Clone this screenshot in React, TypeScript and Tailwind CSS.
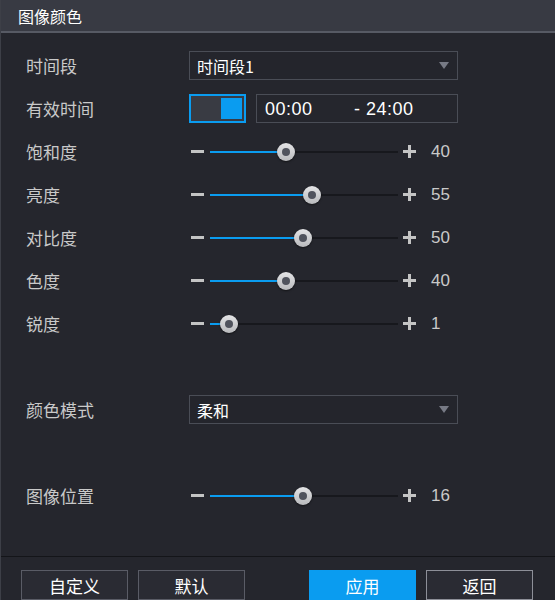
import React from "react";

const font = { fontFamily: '"Noto Sans CJK SC", "Noto Sans", sans-serif' };
const numFont = { fontFamily: '"Liberation Sans", Arial, sans-serif' };

function Label({ children }: { children: React.ReactNode }) {
  return <div className="w-[163px] shrink-0 text-[17px] text-[#c9c9c9] leading-none">{children}</div>;
}

function Slider({ pos, value }: { pos: number; value: string }) {
  return (
    <div className="flex items-center">
      <div className="ml-[2px] w-[13px] h-[3px] bg-[#c4c4c4]" />
      <div className="relative ml-[6px] w-[188px] h-[2px] bg-[#17181d]">
        <div className="absolute left-0 top-0 h-[2px] bg-[#0a9cf0]" style={{ width: pos }} />
        <div
          className="absolute top-1/2 w-[18px] h-[18px] -translate-x-1/2 -translate-y-1/2 rounded-full bg-gradient-to-b from-[#e4e4e6] to-[#b9babd] flex items-center justify-center shadow-[0_1px_2px_rgba(0,0,0,0.5)]"
          style={{ left: pos }}
        >
          <div className="w-[8px] h-[8px] rounded-full bg-[#50535d]" />
        </div>
      </div>
      <div className="relative ml-[5px] w-[13px] h-[13px]">
        <div className="absolute left-0 top-[5px] w-[13px] h-[3px] bg-[#c4c4c4]" />
        <div className="absolute left-[5px] top-0 w-[3px] h-[13px] bg-[#c4c4c4]" />
      </div>
      <div className="ml-[15px] text-[17px] text-[#c9c9c9] leading-none" style={numFont}>{value}</div>
    </div>
  );
}

function Select({ text }: { text: string }) {
  return (
    <div className="w-[269px] h-[29px] border border-[#4a4d56] bg-[#24252c] flex items-center pl-[7px] pr-[8px]">
      <span className="text-[16px] text-white leading-none flex-1">{text}</span>
      <svg width="10" height="7" viewBox="0 0 10 7">
        <polygon points="0,0 10,0 5,7" fill="#777a85" />
      </svg>
    </div>
  );
}

function Row({ children }: { children: React.ReactNode }) {
  return <div className="h-[43px] flex items-center pl-[25px]">{children}</div>;
}

function Button({ text, primary, light }: { text: string; primary?: boolean; light?: boolean }) {
  return (
    <div
      className={
        "w-[107px] h-[30px] flex items-center justify-center text-[17px] leading-none " +
        (primary
          ? "bg-[#0a9cf0] text-white border border-[#0a9cf0]"
          : light
          ? "bg-[#2a2b33] text-white border border-[#8d8f98]"
          : "bg-[#2a2b33] text-white border border-[#5a5c66]")
      }
    >
      {text}
    </div>
  );
}

export default function App() {
  return (
    <div className="w-[555px] h-[600px] bg-[#25262d] flex flex-col overflow-hidden border-l border-[#3d3f47]" style={font}>
      <div className="h-[33px] shrink-0 bg-[#383a43] border-b-2 border-[#575a64] flex items-center pl-[17px]">
        <span className="text-[16px] text-white leading-none">图像颜色</span>
      </div>
      <div className="h-[11px] shrink-0" />
      <Row>
        <Label>时间段</Label>
        <Select text="时间段1" />
      </Row>
      <Row>
        <Label>有效时间</Label>
        <div className="w-[57px] h-[29px] border-2 border-[#0a9cf0] bg-[#393b43] flex items-center justify-end pr-[2px]">
          <div className="w-[21px] h-[21px] bg-[#0a9cf0]" />
        </div>
        <div
          className="ml-[10px] w-[202px] h-[29px] border border-[#4a4d56] flex items-center pl-[8px] text-[18px] text-white leading-none tracking-[0.5px]"
          style={numFont}
        >
          <span className="w-[89px]">00:00</span>
          <span>- 24:00</span>
        </div>
      </Row>
      <Row>
        <Label>饱和度</Label>
        <Slider pos={76} value="40" />
      </Row>
      <Row>
        <Label>亮度</Label>
        <Slider pos={102} value="55" />
      </Row>
      <Row>
        <Label>对比度</Label>
        <Slider pos={93} value="50" />
      </Row>
      <Row>
        <Label>色度</Label>
        <Slider pos={76} value="40" />
      </Row>
      <Row>
        <Label>锐度</Label>
        <Slider pos={19} value="1" />
      </Row>
      <div className="h-[43px] shrink-0" />
      <Row>
        <Label>颜色模式</Label>
        <Select text="柔和" />
      </Row>
      <div className="h-[43px] shrink-0" />
      <Row>
        <Label>图像位置</Label>
        <Slider pos={93} value="16" />
      </Row>
      <div className="flex-1" />
      <div className="h-[44px] shrink-0 border-t border-[#141519] flex pt-[13px] pl-[20px]">
        <Button text="自定义" />
        <div className="w-[10px]" />
        <Button text="默认" />
        <div className="w-[64px]" />
        <Button text="应用" primary />
        <div className="w-[10px]" />
        <Button text="返回" light />
      </div>
    </div>
  );
}
